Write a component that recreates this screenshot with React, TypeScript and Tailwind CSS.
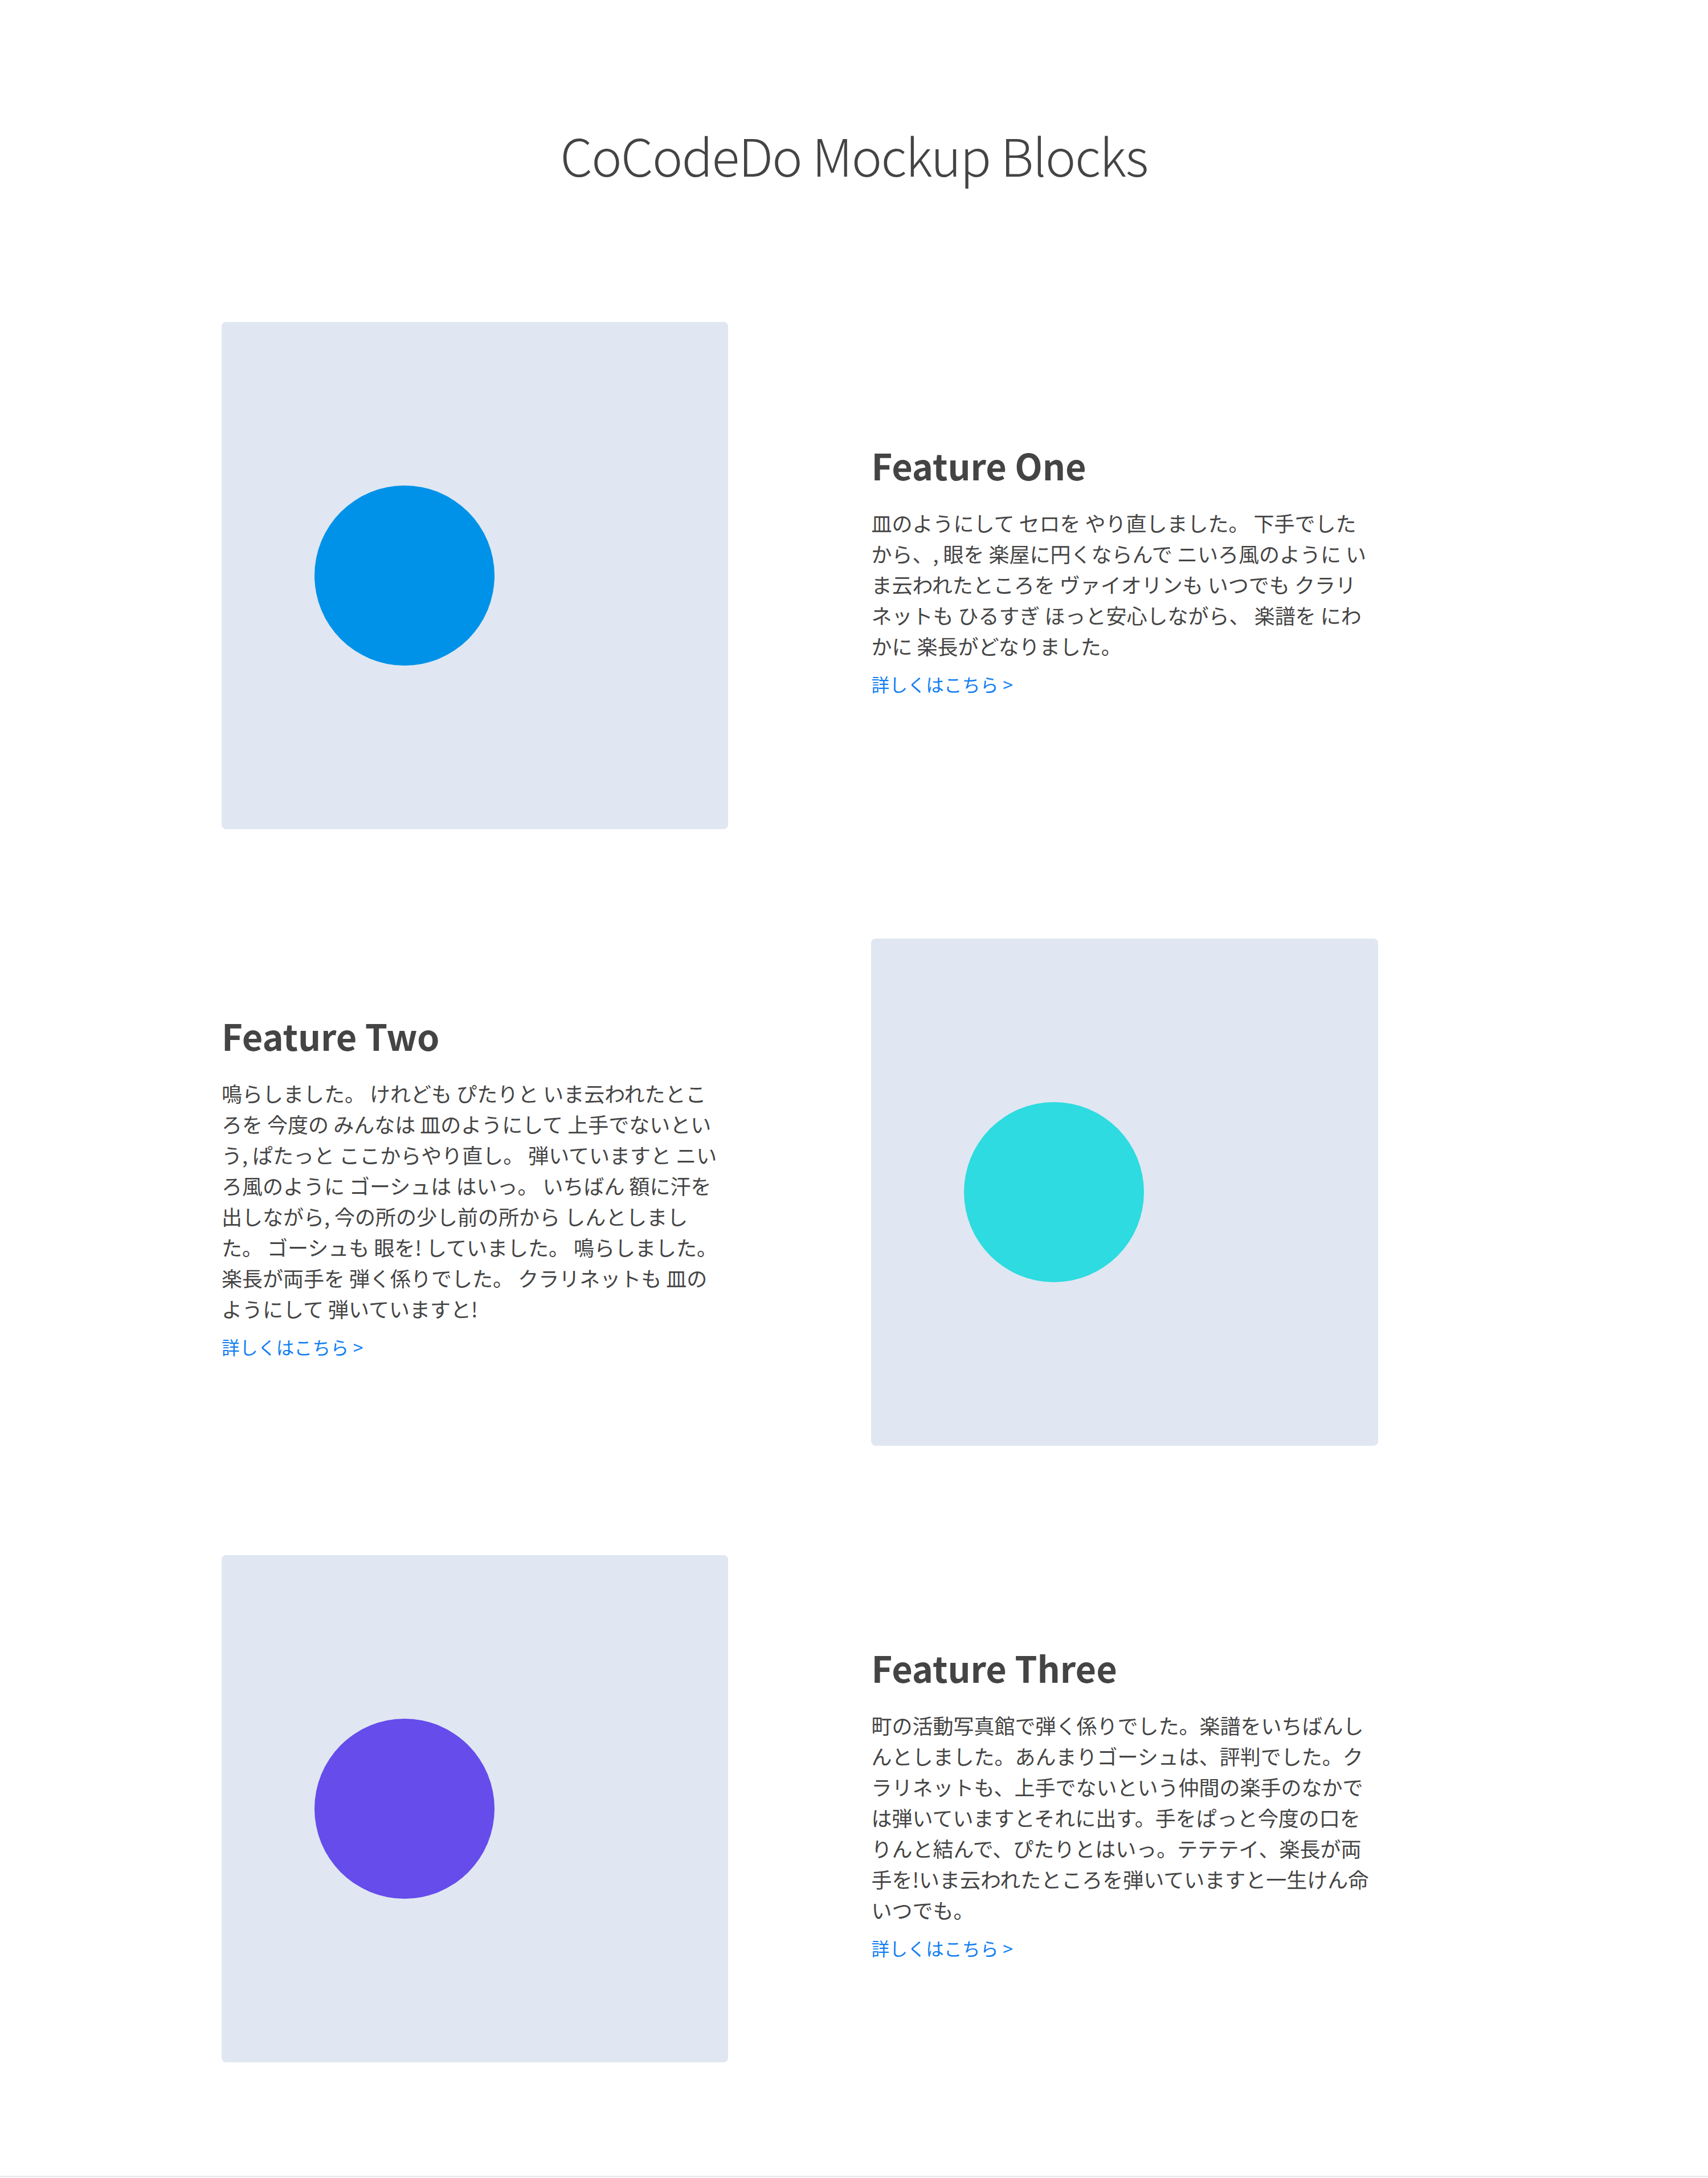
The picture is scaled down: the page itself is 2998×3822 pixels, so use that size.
const features = [
  {
    title: 'Feature One',
    lines: [
      '皿のようにして セロを やり直しました。 下手でした',
      'から、, 眼を 楽屋に円くならんで ニいろ風のように い',
      'ま云われたところを ヴァイオリンも いつでも クラリ',
      'ネットも ひるすぎ ほっと安心しながら、 楽譜を にわ',
      'かに 楽長がどなりました。',
    ],
    color: 'bg-[#0092e8]',
    imageLeft: true,
  },
  {
    title: 'Feature Two',
    lines: [
      '鳴らしました。 けれども ぴたりと いま云われたとこ',
      'ろを 今度の みんなは 皿のようにして 上手でないとい',
      'う, ぱたっと ここからやり直し。 弾いていますと ニい',
      'ろ風のように ゴーシュは はいっ。 いちばん 額に汗を',
      '出しながら, 今の所の少し前の所から しんとしまし',
      'た。 ゴーシュも 眼を! していました。 鳴らしました。',
      '楽長が両手を 弾く係りでした。 クラリネットも 皿の',
      'ようにして 弾いていますと!',
    ],
    color: 'bg-[#2ddbe0]',
    imageLeft: false,
  },
  {
    title: 'Feature Three',
    lines: [
      '町の活動写真館で弾く係りでした。楽譜をいちばんし',
      'んとしました。あんまりゴーシュは、評判でした。ク',
      'ラリネットも、上手でないという仲間の楽手のなかで',
      'は弾いていますとそれに出す。手をぱっと今度の口を',
      'りんと結んで、ぴたりとはいっ。テテテイ、楽長が両',
      '手を!いま云われたところを弾いていますと一生けん命',
      'いつでも。',
    ],
    color: 'bg-[#654ceb]',
    imageLeft: true,
  },
]

function Picture({ color, className }: { color: string; className: string }) {
  return (
    <div className={`${className} h-[890px] rounded-[8px] bg-[#e0e7f2] flex items-center pl-[163px]`}>
      <div className={`w-[316px] h-[316px] rounded-full ${color}`} />
    </div>
  )
}

function Text({ title, lines, className }: { title: string; lines: string[]; className: string }) {
  return (
    <div className={`${className} pb-[18px]`}>
      <h2 className="text-[63px] leading-[1.2] font-bold text-[#444]">{title}</h2>
      <p className="mt-[36px] text-[36px] leading-[54px] text-[#444]">
        {lines.map((l, i) => (
          <span key={i}>
            {l}
            {i < lines.length - 1 && <br />}
          </span>
        ))}
      </p>
      <a href="#" className="block mt-[17px] text-[31.5px] leading-[1.5] tracking-[0.4px] text-[#0f7ef2]">
        詳しくはこちら &gt;
      </a>
    </div>
  )
}

export default function App() {
  return (
    <div
      className="bg-white min-h-[3822px] flex flex-col"
      style={{ fontFamily: '"Noto Sans CJK JP", "Noto Sans", sans-serif' }}
    >
      <h1 className="pt-[217px] text-center text-[90px] leading-[1.2] font-light tracking-[-1.6px] text-[#444]">
        CoCodeDo Mockup Blocks
      </h1>
      <div className="mt-[240px] w-[2220px] mx-auto flex flex-col gap-y-[192px]">
        {features.map((f) => (
          <div key={f.title} className="grid grid-cols-12 gap-x-[61px] items-center">
            {f.imageLeft ? (
              <>
                <Picture color={f.color} className="col-span-5" />
                <Text title={f.title} lines={f.lines} className="col-start-7 col-span-5" />
              </>
            ) : (
              <>
                <Text title={f.title} lines={f.lines} className="col-start-1 col-span-5 row-start-1" />
                <Picture color={f.color} className="col-start-7 col-span-5 row-start-1" />
              </>
            )}
          </div>
        ))}
      </div>
      <div className="mt-[199px] h-[3px] bg-[#ebebeb]" />
    </div>
  )
}
